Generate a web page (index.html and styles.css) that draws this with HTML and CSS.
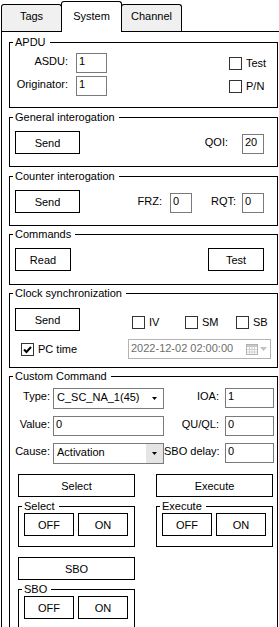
FILE: index.html
```html
<!DOCTYPE html>
<html lang="en">
<head>
    <meta charset="UTF-8">
    <meta name="viewport" content="width=device-width, initial-scale=1.0">
    <title>System</title>
    <link rel="stylesheet" href="styles.css">
</head>
<body>

    <div class="tabs">
        <div class="tab">Tags</div>
        <div class="tab active">System</div>
        <div class="tab">Channel</div>
    </div>

    <div class="page">

        <div class="group group-apdu">
            <div class="group-title">APDU</div>
            <div class="row row-apdu first">
                <span class="lbl lbl-apdu">ASDU:</span>
                <input class="field field-apdu" type="text" value="1">
                <label class="check check-apdu"><span class="box"></span>Test</label>
            </div>
            <div class="row row-apdu">
                <span class="lbl lbl-apdu">Originator:</span>
                <input class="field field-apdu" type="text" value="1">
                <label class="check check-apdu"><span class="box"></span>P/N</label>
            </div>
        </div>

        <div class="group group-small">
            <div class="group-title">General interogation</div>
            <div class="row row-btn">
                <button class="btn btn-send">Send</button>
                <span class="lbl lbl-qoi">QOI:</span>
                <input class="field field-small qoi" type="text" value="20">
            </div>
        </div>

        <div class="group group-small">
            <div class="group-title">Counter interogation</div>
            <div class="row row-btn">
                <button class="btn btn-send">Send</button>
                <span class="lbl lbl-frz">FRZ:</span>
                <input class="field field-small frz" type="text" value="0">
                <span class="lbl lbl-rqt">RQT:</span>
                <input class="field field-small rqt" type="text" value="0">
            </div>
        </div>

        <div class="group group-small group-commands">
            <div class="group-title">Commands</div>
            <div class="row row-btn">
                <button class="btn btn-read">Read</button>
                <button class="btn btn-test">Test</button>
            </div>
        </div>

        <div class="group group-clock">
            <div class="group-title">Clock synchronization</div>
            <div class="row row-btn">
                <button class="btn btn-send">Send</button>
                <label class="check check-iv"><span class="box"></span>IV</label>
                <label class="check check-sm"><span class="box"></span>SM</label>
                <label class="check check-sb"><span class="box"></span>SB</label>
            </div>
            <div class="row row-time">
                <label class="check check-pc"><span class="box checked"><svg width="11" height="11" viewBox="0 0 11 11"><path d="M2 5.5 L4.5 8 L9 3" fill="none" stroke="#000" stroke-width="2"/></svg></span>PC time</label>
                <div class="datepicker">
                    <span class="date-text">2022-12-02 02:00:00</span>
                    <span class="date-btn">
                        <svg width="12" height="11" viewBox="0 0 12 11"><rect x="0.5" y="0.5" width="11" height="10" fill="#fff" stroke="#b4b4b4"/><rect x="1" y="1" width="10" height="2" fill="#c8c8c8"/><path d="M1 5.5h10M1 8h10M3.5 3v7M6 3v7M8.5 3v7" stroke="#d0d0d0"/></svg>
                        <svg class="date-arrow" width="7" height="4" viewBox="0 0 7 4"><path d="M0 0h7L3.5 4z" fill="#c0c0c0"/></svg>
                    </span>
                </div>
            </div>
        </div>

        <div class="group group-custom">
            <div class="group-title">Custom Command</div>
            <div class="row row-field row-type">
                <span class="lbl lbl-left">Type:</span>
                <div class="combo">
                    <span class="combo-text">C_SC_NA_1(45)</span>
                    <span class="combo-btn"><svg width="5" height="3" viewBox="0 0 5 3"><path d="M0 0h5L2.5 3z" fill="#000"/></svg></span>
                </div>
                <span class="lbl lbl-right">IOA:</span>
                <input class="field field-right" type="text" value="1">
            </div>
            <div class="row row-field row-value">
                <span class="lbl lbl-left">Value:</span>
                <input class="field field-value" type="text" value="0">
                <span class="lbl lbl-right">QU/QL:</span>
                <input class="field field-right" type="text" value="0">
            </div>
            <div class="row row-field row-cause">
                <span class="lbl lbl-left">Cause:</span>
                <div class="combo">
                    <span class="combo-text">Activation</span>
                    <span class="combo-btn hot"><svg width="5" height="3" viewBox="0 0 5 3"><path d="M0 0h5L2.5 3z" fill="#000"/></svg></span>
                </div>
                <span class="lbl lbl-right">SBO delay:</span>
                <input class="field field-right" type="text" value="0">
            </div>

            <div class="row row-wide">
                <button class="btn btn-wide">Select</button>
                <button class="btn btn-wide second">Execute</button>
            </div>

            <div class="row row-sub">
                <div class="group subgroup">
                    <div class="group-title">Select</div>
                    <div class="row row-onoff">
                        <button class="btn btn-off">OFF</button>
                        <button class="btn btn-on">ON</button>
                    </div>
                </div>
                <div class="group subgroup second">
                    <div class="group-title">Execute</div>
                    <div class="row row-onoff">
                        <button class="btn btn-off">OFF</button>
                        <button class="btn btn-on">ON</button>
                    </div>
                </div>
            </div>

            <div class="row row-wide">
                <button class="btn btn-wide">SBO</button>
            </div>

            <div class="row row-sub">
                <div class="group subgroup">
                    <div class="group-title">SBO</div>
                    <div class="row row-onoff">
                        <button class="btn btn-off">OFF</button>
                        <button class="btn btn-on">ON</button>
                    </div>
                </div>
            </div>
        </div>

    </div>

</body>
</html>
```

FILE: styles.css
```css
html, body {
    overflow: hidden;
}

body {
    margin: 0;
    font-family: 'Liberation Sans', Arial, sans-serif;
    font-size: 11px;
    line-height: 13px;
    color: #000;
    background-color: #fff;
}

/* tab strip */

.tabs {
    display: flex;
    align-items: flex-end;
    height: 31px;
    padding-left: 1px;
}

.tab {
    width: 61px;
    height: 27px;
    box-sizing: border-box;
    margin-right: -1px;
    padding-top: 5px;
    border: 1px solid #000;
    border-bottom: none;
    border-radius: 3px 3px 0 0;
    background-color: #f0f0f0;
    text-align: center;
}

.tab.active {
    position: relative;
    z-index: 1;
    height: 31px;
    margin-bottom: -1px;
    padding-top: 8px;
    background-color: #fff;
}

.page {
    margin-left: 1px;
    padding: 0 1px 0 7px;
    border-left: 1px solid #000;
    border-top: 1px solid #000;
}

/* group boxes */

.group {
    box-sizing: border-box;
    border: 1px solid #000;
    margin-top: 8px;
}

.group-title {
    display: table;
    height: 13px;
    margin: -7px 0 0 3px;
    padding: 0 4px 0 2px;
    background-color: #fff;
}

.group-apdu {
    height: 66px;
    margin-top: 10px;
}

.group-small {
    height: 50px;
    margin-top: 9px;
}

.group-commands {
    height: 51px;
    margin-top: 8px;
}

.group-clock {
    height: 75px;
}

.group-custom {
    padding-bottom: 20px;
}

.row {
    display: flex;
}

/* controls */

.lbl {
    white-space: nowrap;
    text-align: right;
}

.field {
    box-sizing: border-box;
    height: 20px;
    margin: 0;
    padding: 0 2px 4px 2px;
    border: 1px solid #7a7a7a;
    font-family: inherit;
    font-size: 11px;
    color: #000;
    background-color: #fff;
    outline: none;
}

.btn {
    box-sizing: border-box;
    height: 23px;
    margin: 0;
    padding: 0;
    border: 1px solid #000;
    font-family: inherit;
    font-size: 11px;
    color: #000;
    background-color: #fff;
}

.check {
    display: flex;
    align-items: center;
    white-space: nowrap;
}

.box {
    box-sizing: border-box;
    width: 13px;
    height: 13px;
    margin-right: 4px;
    border: 1px solid #333;
    background-color: #fff;
    display: flex;
    align-items: center;
    justify-content: center;
}

/* APDU */

.row-apdu {
    height: 20px;
    margin-top: 3px;
    align-items: center;
}

.row-apdu.first {
    margin-top: 4px;
}

.row-apdu .lbl {
    align-self: flex-start;
    margin-top: 2px;
}

.lbl-apdu {
    width: 58px;
}

.field-apdu {
    width: 31px;
    margin-left: 8px;
}

.check-apdu {
    margin-left: 122px;
}

/* button rows */

.row-btn {
    height: 23px;
    margin-top: 7px;
    align-items: flex-end;
}

.row-btn .lbl {
    align-self: center;
}

.btn-send {
    width: 65px;
    margin-left: 5px;
}

.field-small {
    width: 22px;
}

.lbl-qoi {
    width: 148px;
}

.qoi {
    margin-left: 14px;
}

.lbl-frz {
    width: 82px;
}

.frz {
    margin-left: 8px;
}

.lbl-rqt {
    width: 44px;
}

.rqt {
    margin-left: 6px;
}

.btn-read,
.btn-test {
    width: 56px;
}

.btn-read {
    margin-left: 5px;
}

.btn-test {
    margin-left: 137px;
}

/* clock synchronization */

.group-clock .row-btn {
    margin-top: 8px;
}

.group-clock .row-btn .check {
    align-self: flex-end;
    margin-bottom: 2px;
}

.check-iv {
    width: 53px;
    margin-left: 52px;
}

.check-sm {
    width: 51px;
}

.row-time {
    height: 20px;
    margin-top: 8px;
    align-items: center;
}

.check-pc {
    width: 107px;
    margin-left: 11px;
}

.datepicker {
    box-sizing: border-box;
    width: 143px;
    height: 20px;
    display: flex;
    border: 1px solid #b4b4b4;
    color: #6d6d6d;
}

.date-text {
    flex: 1;
    padding: 2px 0 0 2px;
}

.date-btn {
    display: flex;
    align-items: center;
    width: 24px;
}

.date-arrow {
    margin-left: 2px;
}

/* custom command */

.row-field {
    height: 21px;
    margin-top: 6px;
}

.row-type {
    margin-top: 5px;
}

.row-value {
    margin-top: 7px;
}

.row-field .lbl {
    margin-top: 2px;
}

.lbl-left {
    width: 40px;
}

.lbl-right {
    width: 55px;
}

.combo {
    box-sizing: border-box;
    width: 111px;
    height: 21px;
    margin-left: 3px;
    display: flex;
    border: 1px solid #7a7a7a;
}

.combo-text {
    flex: 1;
    padding: 2px 0 0 3px;
}

.combo-btn {
    width: 17px;
    display: flex;
    align-items: center;
    justify-content: center;
}

.combo-btn.hot {
    background-color: #e5e5e5;
}

.field-value {
    width: 111px;
    margin-left: 3px;
}

.field-right {
    width: 49px;
    margin-left: 6px;
}

.row-wide {
    margin-top: 10px;
}

.btn-wide {
    width: 117px;
    margin-left: 8px;
}

.btn-wide.second,
.subgroup.second {
    margin-left: 21px;
}

.row-sub {
    margin-top: 9px;
}

.subgroup {
    width: 117px;
    height: 41px;
    margin-top: 0;
    margin-left: 8px;
}

.row-onoff {
    margin-top: 0;
}

.btn-off,
.btn-on {
    width: 50px;
}

.btn-off {
    margin-left: 5px;
}

.btn-on {
    margin-left: 4px;
}
```
